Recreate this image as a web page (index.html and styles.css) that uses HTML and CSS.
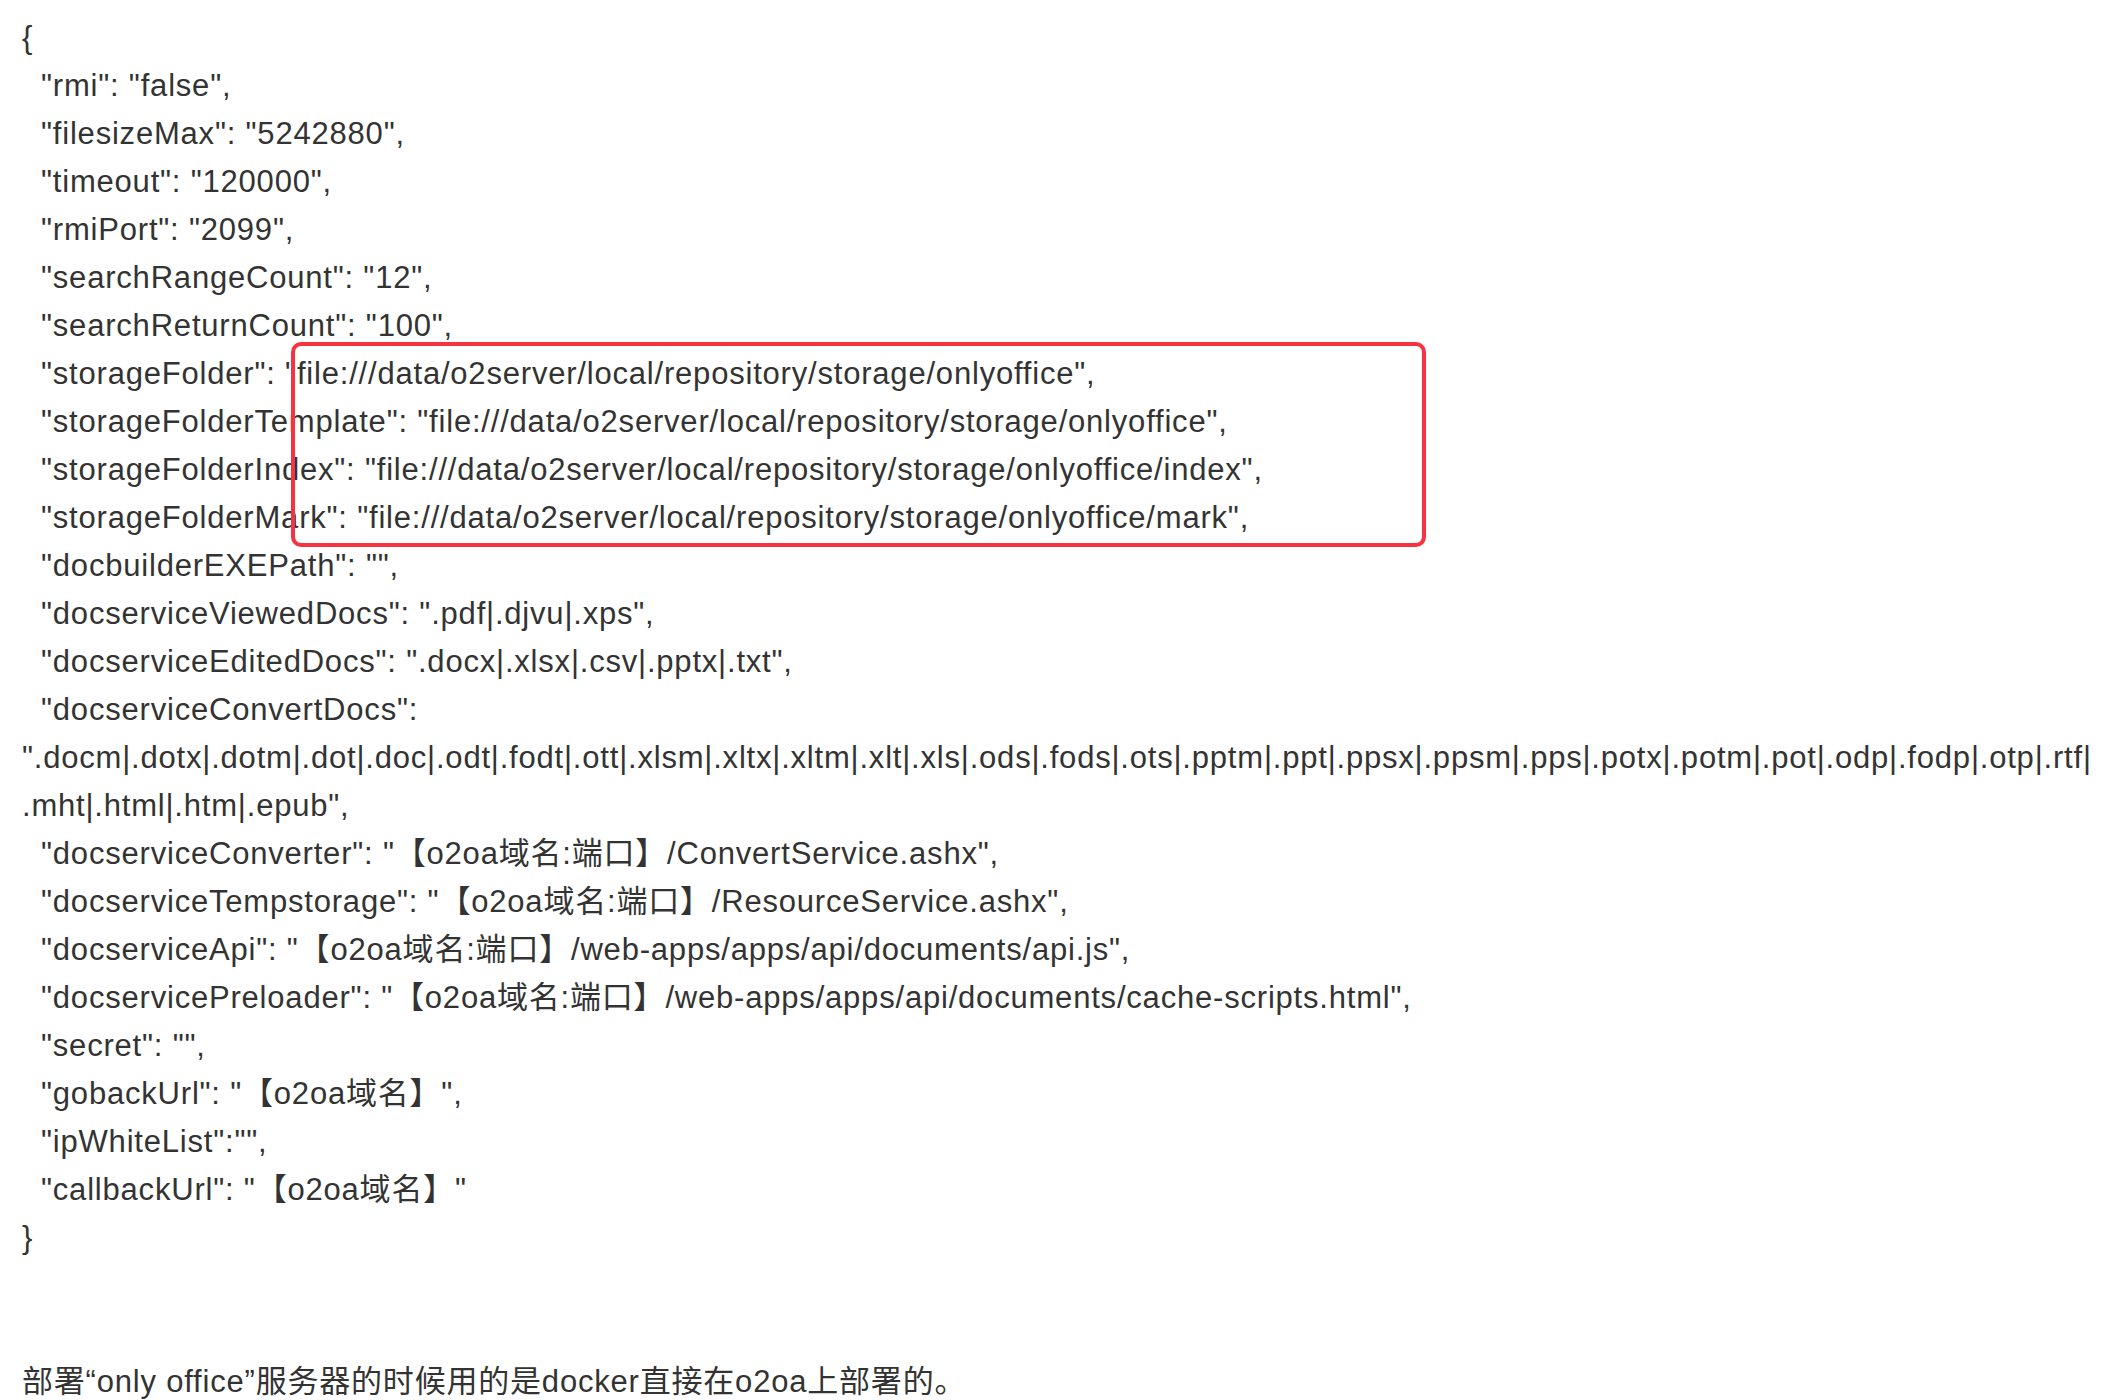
FILE: index.html
```html
<!DOCTYPE html>
<html lang="zh-CN">
<head>
  <meta charset="UTF-8">
  <title>onlyoffice 配置</title>
  <link rel="stylesheet" href="styles.css">
</head>
<body>
  <div class="doc">
    <div class="code">
      <div class="line">{</div>
      <div class="line in">"rmi": "false",</div>
      <div class="line in">"filesizeMax": "5242880",</div>
      <div class="line in">"timeout": "120000",</div>
      <div class="line in">"rmiPort": "2099",</div>
      <div class="line in">"searchRangeCount": "12",</div>
      <div class="line in">"searchReturnCount": "100",</div>
      <div class="line in">"storageFolder": "file:///data/o2server/local/repository/storage/onlyoffice",</div>
      <div class="line in">"storageFolderTemplate": "file:///data/o2server/local/repository/storage/onlyoffice",</div>
      <div class="line in">"storageFolderIndex": "file:///data/o2server/local/repository/storage/onlyoffice/index",</div>
      <div class="line in">"storageFolderMark": "file:///data/o2server/local/repository/storage/onlyoffice/mark",</div>
      <div class="line in">"docbuilderEXEPath": "",</div>
      <div class="line in">"docserviceViewedDocs": ".pdf|.djvu|.xps",</div>
      <div class="line in">"docserviceEditedDocs": ".docx|.xlsx|.csv|.pptx|.txt",</div>
      <div class="line in">"docserviceConvertDocs":</div>
      <div class="line">".docm|.dotx|.dotm|.dot|.doc|.odt|.fodt|.ott|.xlsm|.xltx|.xltm|.xlt|.xls|.ods|.fods|.ots|.pptm|.ppt|.ppsx|.ppsm|.pps|.potx|.potm|.pot|.odp|.fodp|.otp|.rtf|</div>
      <div class="line">.mht|.html|.htm|.epub",</div>
      <div class="line in">"docserviceConverter": "【o2oa域名:端口】/ConvertService.ashx",</div>
      <div class="line in">"docserviceTempstorage": "【o2oa域名:端口】/ResourceService.ashx",</div>
      <div class="line in">"docserviceApi": "【o2oa域名:端口】/web-apps/apps/api/documents/api.js",</div>
      <div class="line in">"docservicePreloader": "【o2oa域名:端口】/web-apps/apps/api/documents/cache-scripts.html",</div>
      <div class="line in">"secret": "",</div>
      <div class="line in">"gobackUrl": "【o2oa域名】",</div>
      <div class="line in">"ipWhiteList":"",</div>
      <div class="line in">"callbackUrl": "【o2oa域名】"</div>
      <div class="line">}</div>
    </div>

    <div class="mark"></div>

    <p class="note">部署“only office”服务器的时候用的是docker直接在o2oa上部署的。</p>
  </div>
</body>
</html>
```

FILE: styles.css
```css
html, body {
  margin: 0;
  overflow: hidden;
  background: #fff;
}

body {
  font-family: "Liberation Sans", "Noto Sans CJK SC", sans-serif;
  font-size: 31px;
  letter-spacing: 0.8px;
  color: #333;
}

.doc {
  position: relative;
  padding: 14px 0 0 22px;
}

.line {
  height: 48px;
  line-height: 48px;
  white-space: nowrap;
}

.in {
  padding-left: 19px;
}

/* red annotation box drawn over the storage lines */
.mark {
  position: absolute;
  left: 291px;
  top: 342px;
  width: 1127px;
  height: 197px;
  border: 4px solid #f7333f;
  border-radius: 10px;
}

.note {
  margin: 96px 0 0 0;
  line-height: 48px;
}
```
